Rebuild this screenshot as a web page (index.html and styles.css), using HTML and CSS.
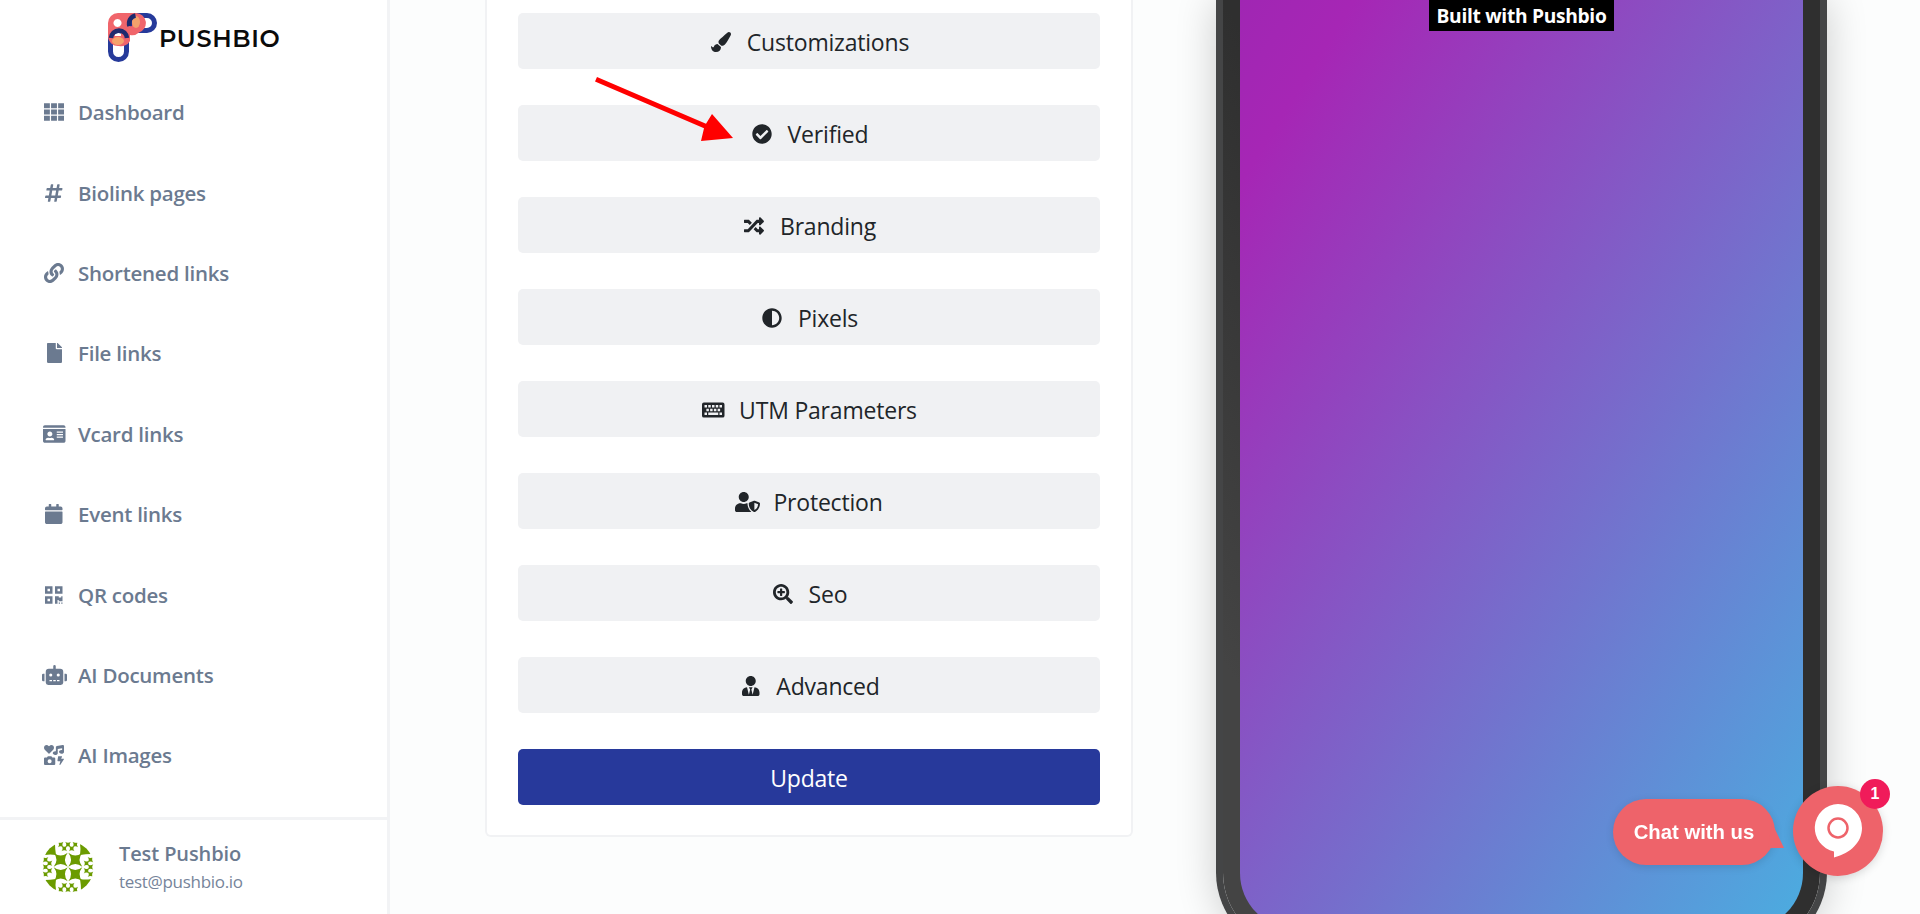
FILE: index.html
```html
<!DOCTYPE html>
<html lang="en">
<head>
<meta charset="utf-8">
<title>Pushbio</title>
<link rel="stylesheet" href="styles.css">
</head>
<body>
<div class="app">
  <aside class="sidebar">
    <a class="logo">
      <svg class="logo-mark" viewBox="0 0 50 50" aria-hidden="true">
        <rect x="2.500" y="18.500" width="16" height="29" rx="8" fill="none" stroke="#263a9a" stroke-width="5"/>
        <rect x="21.500" y="3.500" width="25" height="15" rx="7.500" fill="none" stroke="#263a9a" stroke-width="5"/>
        <path fill="#f0656b" fill-rule="evenodd" d="M10 1h18a10 10 0 0 1 3 19.500A10 10 0 0 1 22 23v6a10 10 0 0 1-11 5A10 10 0 0 1 0 24V11A10 10 0 0 1 10 1zM9.500 7a4 4 0 1 0 .01 0zM24 6a4 4 0 0 0-4 4v3a4 4 0 0 0 4 1zM9 20a3 3 0 0 0-2 4h6v-4z"/>
        <ellipse cx="10" cy="29" rx="6" ry="4" fill="#f4a26c"/>
        <ellipse cx="28" cy="10" rx="4" ry="6" fill="#f4a26c"/>
        <path fill="none" stroke="#1f2a6e" stroke-width="4.500" d="M3 26a8 8 0 0 1 8-7.500a8 8 0 0 1 8 7.500M21.500 14a8 8 0 0 1 6-10.500"/>
      </svg>
      <span class="logo-text">PUSHBIO</span>
    </a>
    <nav class="nav">
      <a class="nav-item"><span class="nav-icon"><svg class="icon" viewBox="0 0 512 512"><path d="M0 32h150v128H0zM181 32h150v128H181zM362 32h150v128H362zM0 192h150v128H0zM181 192h150v128H181zM362 192h150v128H362zM0 352h150v128H0zM181 352h150v128H181zM362 352h150v128H362z"/></svg></span>Dashboard</a>
      <a class="nav-item"><span class="nav-icon"><svg class="icon" viewBox="0 0 448 512"><path d="M440.667 182.109l7.143-40c1.313-7.355-4.342-14.109-11.813-14.109h-74.81l14.623-81.891C377.123 38.754 371.468 32 363.997 32h-40.632a12 12 0 0 0-11.813 9.891L296.175 128H197.54l14.623-81.891C213.477 38.754 207.822 32 200.35 32h-40.632a12 12 0 0 0-11.813 9.891L132.528 128H53.432a12 12 0 0 0-11.813 9.891l-7.143 40C33.163 185.246 38.818 192 46.289 192h74.81L98.242 320H19.146a12 12 0 0 0-11.813 9.891l-7.143 40C-1.123 377.246 4.532 384 12.003 384h74.81L72.19 465.891C70.877 473.246 76.532 480 84.003 480h40.632a12 12 0 0 0 11.813-9.891L151.826 384h98.634l-14.623 81.891C234.523 473.246 240.178 480 247.65 480h40.632a12 12 0 0 0 11.813-9.891L315.472 384h79.096a12 12 0 0 0 11.813-9.891l7.143-40c1.313-7.355-4.342-14.109-11.813-14.109h-74.81l22.857-128h79.096a12 12 0 0 0 11.813-9.891zM261.889 320h-98.634l22.857-128h98.634l-22.857 128z"/></svg></span>Biolink pages</a>
      <a class="nav-item"><span class="nav-icon"><svg class="icon" viewBox="0 0 512 512"><path d="M326.612 185.391c59.747 59.809 58.927 155.698.36 214.59-.11.12-.24.25-.36.37l-67.2 67.2c-59.27 59.27-155.699 59.262-214.96 0-59.27-59.26-59.27-155.7 0-214.96l37.106-37.106c9.84-9.84 26.786-3.3 27.294 10.606.648 17.722 3.826 35.527 9.69 52.721 1.986 5.822.567 12.262-3.783 16.612l-13.087 13.087c-28.026 28.026-28.905 73.66-1.155 101.96 28.024 28.579 74.086 28.749 102.325.51l67.2-67.19c28.191-28.191 28.073-73.757 0-101.83-3.701-3.694-7.429-6.564-10.341-8.569a16.037 16.037 0 0 1-6.947-12.606c-.396-10.567 3.348-21.456 11.698-29.806l21.054-21.055c5.521-5.521 14.182-6.199 20.584-1.731a152.482 152.482 0 0 1 20.522 17.197zM467.547 44.449c-59.261-59.262-155.69-59.27-214.96 0l-67.2 67.2c-.12.12-.25.25-.36.37-58.566 58.892-59.387 154.781.36 214.59a152.454 152.454 0 0 0 20.521 17.196c6.402 4.468 15.064 3.789 20.584-1.731l21.054-21.055c8.35-8.35 12.094-19.239 11.698-29.806a16.037 16.037 0 0 0-6.947-12.606c-2.912-2.005-6.64-4.875-10.341-8.569-28.073-28.073-28.191-73.639 0-101.83l67.2-67.19c28.239-28.239 74.3-28.069 102.325.51 27.75 28.3 26.872 73.934-1.155 101.96l-13.087 13.087c-4.35 4.35-5.769 10.79-3.783 16.612 5.864 17.194 9.042 34.999 9.69 52.721.509 13.906 17.454 20.446 27.294 10.606l37.106-37.106c59.271-59.259 59.271-155.699.001-214.959z"/></svg></span>Shortened links</a>
      <a class="nav-item"><span class="nav-icon"><svg class="icon" viewBox="0 0 384 512"><path d="M224 136V0H24C10.700 0 0 10.700 0 24v464c0 13.300 10.700 24 24 24h336c13.300 0 24-10.700 24-24V160H248c-13.200 0-24-10.800-24-24zm160-14.100v6.100H256V0h6.100c6.400 0 12.500 2.500 17 7l97.900 98c4.500 4.500 7 10.600 7 16.900z"/></svg></span>File links</a>
      <a class="nav-item"><span class="nav-icon"><svg class="icon" viewBox="0 0 576 512"><path d="M528 32H48C21.500 32 0 53.500 0 80v16h576V80c0-26.500-21.500-48-48-48zM0 432c0 26.500 21.500 48 48 48h480c26.500 0 48-21.500 48-48V128H0v304zm352-232c0-4.400 3.600-8 8-8h144c4.400 0 8 3.600 8 8v16c0 4.400-3.600 8-8 8H360c-4.400 0-8-3.600-8-8v-16zm0 64c0-4.400 3.600-8 8-8h144c4.400 0 8 3.600 8 8v16c0 4.400-3.600 8-8 8H360c-4.400 0-8-3.600-8-8v-16zm0 64c0-4.400 3.600-8 8-8h144c4.400 0 8 3.600 8 8v16c0 4.400-3.600 8-8 8H360c-4.400 0-8-3.600-8-8v-16zM176 192c35.300 0 64 28.700 64 64s-28.700 64-64 64-64-28.700-64-64 28.700-64 64-64zM67.100 396.200C75.500 370.500 99.600 352 128 352h8.200c12.300 5.100 25.700 8 39.800 8s27.600-2.900 39.800-8h8.200c28.400 0 52.500 18.500 60.900 44.200 3.200 9.900-5.200 19.800-15.600 19.800H82.700c-10.400 0-18.800-10-15.600-19.800z"/></svg></span>Vcard links</a>
      <a class="nav-item"><span class="nav-icon"><svg class="icon" viewBox="0 0 448 512"><path d="M12 192h424c6.600 0 12 5.400 12 12v260c0 26.500-21.500 48-48 48H48c-26.500 0-48-21.500-48-48V204c0-6.600 5.400-12 12-12zm436-44v-36c0-26.500-21.500-48-48-48h-48V12c0-6.600-5.400-12-12-12h-40c-6.600 0-12 5.400-12 12v52H160V12c0-6.600-5.400-12-12-12h-40c-6.600 0-12 5.400-12 12v52H48C21.500 64 0 85.500 0 112v36c0 6.600 5.400 12 12 12h424c6.600 0 12-5.400 12-12z"/></svg></span>Event links</a>
      <a class="nav-item"><span class="nav-icon"><svg class="icon" viewBox="0 0 448 512"><path d="M0 224h192V32H0v192zM64 96h64v64H64V96zm192-64v192h192V32H256zm128 128h-64V96h64v64zM0 480h192V288H0v192zm64-128h64v64H64v-64zm352-64h32v128h-96v-32h-32v96h-64V288h96v32h64v-32zm0 160h32v32h-32v-32zm-64 0h32v32h-32v-32z"/></svg></span>QR codes</a>
      <a class="nav-item"><span class="nav-icon"><svg class="icon" viewBox="0 0 640 512"><path d="M32,224H64V416H32A31.96166,31.96166,0,0,1,0,384V256A31.96166,31.96166,0,0,1,32,224Zm512-48V448a64.06328,64.06328,0,0,1-64,64H160a64.06328,64.06328,0,0,1-64-64V176a79.974,79.974,0,0,1,80-80H288V32a32,32,0,0,1,64,0V96H464A79.974,79.974,0,0,1,544,176ZM264,256a40,40,0,1,0-40,40A39.997,39.997,0,0,0,264,256Zm-8,128H192v32h64Zm96,0H288v32h64ZM456,256a40,40,0,1,0-40,40A39.997,39.997,0,0,0,456,256Zm-8,128H384v32h64ZM640,256V384a31.96166,31.96166,0,0,1-32,32H576V224h32A31.96166,31.96166,0,0,1,640,256Z"/></svg></span>AI Documents</a>
      <a class="nav-item"><span class="nav-icon"><svg class="icon" viewBox="0 0 512 512"><path d="M116.650 219.350a15.680 15.680 0 0 0 22.650 0l96.750-99.830c28.150-29 26.500-77.100-4.910-103.880C203.750-7.700 163-3.500 137.860 22.440L128 32.580l-9.850-10.140C93.050-3.500 52.250-7.700 24.860 15.640c-31.410 26.780-33 74.850-5 103.880zm143.920 100.490h-48l-7.080-14.240a27.390 27.390 0 0 0-25.660-17.780h-71.710a27.390 27.390 0 0 0-25.660 17.780l-7 14.240h-48A27.450 27.450 0 0 0 0 347.300v137.250A27.440 27.440 0 0 0 27.430 512h233.140A27.450 27.450 0 0 0 288 484.550V347.300a27.450 27.450 0 0 0-27.430-27.460zM144 468a52 52 0 1 1 52-52 52 52 0 0 1-52 52zm355.400-115.900h-60.580l22.360-50.750c2.100-6.650-3.930-13.210-12.180-13.210h-75.590c-6.300 0-11.660 3.900-12.500 9.100l-16.800 106.930c-1 6.300 4.880 11.890 12.500 11.890h62.310l-24.200 83c-1.890 6.650 4.200 12.900 12.230 12.900a13.260 13.260 0 0 0 10.920-5.250l92.400-138.910c4.880-6.910-1.160-15.700-10.870-15.700zM478.080.33L329.510 23.170C314.870 25.420 304 38.920 304 54.830V161.600a83.250 83.250 0 0 0-16-1.700c-35.350 0-64 21.480-64 48s28.650 48 64 48c35.200 0 63.730-21.320 64-47.660V99.660l112-17.220v47.180a83.250 83.250 0 0 0-16-1.700c-35.350 0-64 21.480-64 48s28.650 48 64 48c35.200 0 63.730-21.320 64-47.660V32c0-19.480-16-34.420-33.920-31.670z"/></svg></span>AI Images</a>
    </nav>
    <div class="user">
      <svg class="avatar" viewBox="0 0 52 52" aria-hidden="true">
        <defs>
          <clipPath id="avatar-clip"><circle cx="26" cy="26" r="26"/></clipPath>
          <path id="star" d="M-7-7Q0-1.500 7-7Q1.500 0 7 7Q0 1.500-7 7Q-1.500 0-7-7z"/>
          <path id="mini" d="M-2.800-2.800Q0-.6 2.800-2.800Q.6 0 2.800 2.800Q0 .6-2.800 2.800Q-.6 0-2.800-2.800z"/>
          <g id="edge">
            <use href="#mini" x="18.700" y="3.500"/><use href="#mini" x="26" y="3.500"/><use href="#mini" x="33.300" y="3.500"/>
            <use href="#mini" x="22.300" y="7.500"/><use href="#mini" x="29.700" y="7.500"/>
            <path d="M14 14Q8 13 3 14Q4 5 13 3Q13 8 14 14z"/>
          </g>
        </defs>
        <g clip-path="url(#avatar-clip)" fill="#6b9b00">
          <use href="#star" x="18.700" y="18.700"/><use href="#star" x="33.300" y="18.700"/>
          <use href="#star" x="18.700" y="33.300"/><use href="#star" x="33.300" y="33.300"/>
          <use href="#edge"/>
          <use href="#edge" transform="rotate(90 26 26)"/>
          <use href="#edge" transform="rotate(180 26 26)"/>
          <use href="#edge" transform="rotate(270 26 26)"/>
        </g>
      </svg>
      <div class="user-text">
        <div class="user-name">Test Pushbio</div>
        <div class="user-mail">test@pushbio.io</div>
      </div>
    </div>
  </aside>

  <main class="main">
    <section class="card">
      <button class="tab"><span class="tab-icon"><svg class="icon" viewBox="0 0 512 512"><path d="M167.020 309.340c-40.120 2.580-76.530 17.860-97.190 72.300-2.350 6.210-8 9.980-14.590 9.980-11.110 0-45.460-27.670-55.250-34.350C0 439.620 37.930 512 128 512c75.860 0 128-43.770 128-120.190 0-3.110-.65-6.080-.97-9.130l-88.010-73.340zM457.890 0c-15.160 0-29.370 6.710-40.210 16.450C213.270 199.050 192 203.340 192 257.090c0 13.700 3.250 26.760 8.730 38.700l63.820 53.180c7.210 1.800 14.640 3.030 22.390 3.030 62.110 0 98.110-45.470 211.160-256.460 7.380-14.350 13.900-29.850 13.900-45.990C512 20.640 486 0 457.890 0z"/></svg></span>Customizations</button>
      <button class="tab"><span class="tab-icon"><svg class="icon" viewBox="0 0 512 512"><path d="M504 256c0 136.967-111.033 248-248 248S8 392.967 8 256 119.033 8 256 8s248 111.033 248 248zM227.314 387.314l184-184c6.248-6.248 6.248-16.379 0-22.627l-22.627-22.627c-6.248-6.249-16.379-6.249-22.628 0L216 308.118l-70.059-70.059c-6.248-6.248-16.379-6.248-22.628 0l-22.627 22.627c-6.248 6.248-6.248 16.379 0 22.627l104 104c6.249 6.249 16.379 6.249 22.628.001z"/></svg></span>Verified</button>
      <button class="tab"><span class="tab-icon"><svg class="icon" viewBox="0 0 512 512"><path d="M504.971 359.029c9.373 9.373 9.373 24.569 0 33.941l-80 79.984c-15.010 15.010-40.971 4.490-40.971-16.971V416h-58.785a12.004 12.004 0 0 1-8.773-3.812l-70.556-75.596 53.333-57.143L352 336h32v-39.981c0-21.438 25.943-31.998 40.971-16.971l80 79.981zM12 176h84l52.781 56.551 53.333-57.143-70.556-75.596A11.999 11.999 0 0 0 122.785 96H12c-6.627 0-12 5.373-12 12v56c0 6.627 5.373 12 12 12zm372 0v39.984c0 21.460 25.961 31.980 40.971 16.971l80-79.984c9.373-9.373 9.373-24.569 0-33.941l-80-79.981C409.943 24.021 384 34.582 384 56.019V96h-58.785a12.004 12.004 0 0 0-8.773 3.812L96 336H12c-6.627 0-12 5.373-12 12v56c0 6.627 5.373 12 12 12h110.785c3.326 0 6.503-1.381 8.773-3.812L352 176h32z"/></svg></span>Branding</button>
      <button class="tab"><span class="tab-icon"><svg class="icon" viewBox="0 0 512 512"><path d="M8 256c0 136.966 111.033 248 248 248s248-111.034 248-248S392.966 8 256 8 8 119.033 8 256zm248 184V72c101.705 0 184 82.311 184 184 0 101.705-82.311 184-184 184z"/></svg></span>Pixels</button>
      <button class="tab"><span class="tab-icon"><svg class="icon" viewBox="0 0 576 512"><path fill-rule="evenodd" d="M48 64h480a48 48 0 0 1 48 48v288a48 48 0 0 1-48 48H48a48 48 0 0 1-48-48V112a48 48 0 0 1 48-48zM64 128v64h64v-64zM160 128v64h64v-64zM256 128v64h64v-64zM352 128v64h64v-64zM448 128v64h64v-64zM112 224v64h64v-64zM208 224v64h64v-64zM304 224v64h64v-64zM400 224v64h64v-64zM64 320v64h64v-64zM160 320v64h256v-64zM448 320v64h64v-64z"/></svg></span>UTM Parameters</button>
      <button class="tab"><span class="tab-icon"><svg class="icon" viewBox="0 0 640 512"><path d="M622.300 271.100l-115.200-45c-4.100-1.600-12.600-3.700-22.200 0l-115.200 45c-10.700 4.200-17.700 14-17.700 24.900 0 111.600 68.700 188.800 132.900 213.900 9.600 3.700 18 1.600 22.200 0C558.400 489.900 640 420.500 640 296c0-10.900-7-20.700-17.700-24.900zM496 462.400V273.300l95.500 37.300c-5.600 87.100-60.900 135.400-95.500 151.800zM224 256c70.700 0 128-57.300 128-128S294.700 0 224 0 96 57.300 96 128s57.300 128 128 128zm96 40c0-2.500.8-4.700 1.100-7.200-2.500-.1-4.900-.8-7.500-.8h-16.700c-22.200 10.200-46.900 16-72.900 16s-50.600-5.800-72.900-16h-16.700C60.200 288 0 348.200 0 422.400V464c0 26.500 21.500 48 48 48h352c6.800 0 13.300-1.500 19.200-4-54-42.900-99.200-116.700-99.200-212z"/></svg></span>Protection</button>
      <button class="tab"><span class="tab-icon"><svg class="icon" viewBox="0 0 512 512"><path d="M304 192v32c0 6.600-5.400 12-12 12h-56v56c0 6.600-5.400 12-12 12h-32c-6.600 0-12-5.400-12-12v-56h-56c-6.600 0-12-5.400-12-12v-32c0-6.600 5.400-12 12-12h56v-56c0-6.600 5.400-12 12-12h32c6.600 0 12 5.400 12 12v56h56c6.600 0 12 5.400 12 12zm201 284.700L476.700 505c-9.400 9.400-24.600 9.400-33.900 0L343 405.300c-4.500-4.500-7-10.600-7-17V372c-35.300 27.600-79.700 44-128 44C93.100 416 0 322.900 0 208S93.100 0 208 0s208 93.100 208 208c0 48.300-16.400 92.700-44 128h16.300c6.400 0 12.500 2.500 17 7l99.700 99.700c9.300 9.400 9.300 24.600 0 34zM344 208c0-75.200-60.800-136-136-136S72 132.800 72 208s60.800 136 136 136 136-60.800 136-136z"/></svg></span>Seo</button>
      <button class="tab"><span class="tab-icon"><svg class="icon" viewBox="0 0 448 512"><path d="M224 256c70.700 0 128-57.300 128-128S294.700 0 224 0 96 57.300 96 128s57.300 128 128 128zm95.800 32.600L272 480l-32-136 32-56h-96l32 56-32 136-47.800-191.400C56.900 292 0 350.300 0 422.400V464c0 26.500 21.500 48 48 48h352c26.500 0 48-21.500 48-48v-41.600c0-72.100-56.900-130.400-128.200-133.800z"/></svg></span>Advanced</button>
      <button class="update">Update</button>
      <svg class="arrow" viewBox="0 0 140 66" aria-hidden="true">
        <path fill="#ff0000" d="M2 0L111 46.700L117 37L138 61L106 64L109 51.300L0 4.600z"/>
      </svg>
    </section>

    <div class="phone">
      <div class="screen">
        <span class="built">Built with Pushbio</span>
      </div>
    </div>
  </main>
</div>

<div class="chat">
  <span class="chat-bubble">Chat with us</span>
  <span class="chat-button">
    <svg class="chat-icon" viewBox="0 0 48 54" aria-hidden="true">
      <path fill="#fff" d="M24 0a24 24 0 0 1 24 24c0 14-11 25-28 29.500v-6A24 24 0 0 1 24 0z"/>
      <circle cx="24" cy="24" r="9.500" fill="#fff" stroke="#ee636a" stroke-width="2.500"/>
    </svg>
    <span class="chat-badge">1</span>
  </span>
</div>
</body>
</html>
```
FILE: styles.css
```css
* { box-sizing: border-box; }
html, body { margin: 0; height: 914px; overflow: hidden; }
body { font-family: "Open Sans", "Noto Sans", sans-serif; background: #fcfdfd; color: #212529; }
.app { display: flex; height: 914px; }

.sidebar {
  width: 390px; flex: none; display: flex; flex-direction: column;
  background: #fff; border-right: 3px solid #f2f3f5;
}
.logo { display: flex; align-items: flex-start; height: 50px; margin: 12px 0 0 108px; }
.logo-mark { width: 50px; height: 50px; flex: none; }
.logo-text {
  font-family: "Montserrat", "Inter", sans-serif; font-size: 24px; font-weight: 600;
  line-height: 28px; margin: 13px 0 0 1px; color: #0b0b0b; letter-spacing: .65px;
}

.nav { flex: 1; display: flex; flex-direction: column; padding-top: 10px; }
.nav-item {
  display: flex; align-items: center; height: 80.4px; padding-left: 42px;
  font-size: 20.500px; font-weight: 600; color: #6b7a90; letter-spacing: -.25px;
}
.nav-icon { width: 24px; margin-right: 12px; display: flex; justify-content: center; flex: none; }
.icon { display: block; height: 20px; width: auto; fill: currentColor; overflow: visible; }

.user {
  height: 97px; flex: none; display: flex; align-items: center; padding: 0 0 0 42px;
  border-top: 3px solid #f2f3f5;
}
.avatar { width: 52px; height: 52px; flex: none; margin-right: 25px; }
.user-name { font-size: 20px; font-weight: 600; color: #6b7a90; line-height: 26px; letter-spacing: -.1px; }
.user-mail { font-size: 17px; color: #76849a; line-height: 24px; margin-top: 3px; letter-spacing: -.3px; }

.main { flex: 1; display: flex; align-items: flex-start; padding-left: 95px; overflow: hidden; }
.card {
  position: relative; width: 648px; flex: none; padding: 13px 31px 30px;
  display: flex; flex-direction: column; gap: 36px;
  background: #fff; border: 2px solid #f1f2f4; border-top: 0; border-radius: 0 0 6px 6px;
}
.tab, .update {
  display: flex; align-items: center; justify-content: center; height: 56px; width: 100%;
  border: 0; border-radius: 5px; font: inherit; font-size: 23px; letter-spacing: -.2px; padding: 2px 0 0;
}
.tab { background: #f0f1f3; color: #212529; }
.tab-icon { width: 25px; margin-right: 13px; display: flex; justify-content: center; flex: none; }
.update { background: #27399b; color: #fff; }
.arrow { position: absolute; left: 108px; top: 77px; width: 140px; height: 66px; }

.phone {
  width: 611px; height: 953px; flex: none; margin-left: 83px; padding: 0 17px 17px;
  background: linear-gradient(to bottom left, #2f2f2f 50%, #444 85%) padding-box;
  border: solid #444546; border-width: 0 7px 7px;
  border-radius: 0 0 80px 80px; box-shadow: 0 0 40px rgba(0, 0, 0, .2);
}
.screen {
  height: 100%; display: flex; justify-content: center; align-items: flex-start;
  border-radius: 0 0 56px 56px;
  background: linear-gradient(122deg, #a026b3 0%, #a626b5 10%, #4bade0 100%);
}
.built {
  background: #000; color: #fff; font-size: 19.200px; font-weight: 700; line-height: 31px;
  padding: 0 7px; letter-spacing: -.3px;
}

.chat { position: fixed; left: 1613px; top: 786px; display: flex; align-items: center; width: 300px; height: 91px; }
.chat-bubble {
  position: relative; width: 162px; height: 66px; border-radius: 33px; margin-top: 1px;
  display: flex; align-items: center; justify-content: center;
  background: #ee636a; color: #fff; font-family: "Liberation Sans", Arial, sans-serif;
  font-size: 20.300px; font-weight: 700; box-shadow: 0 2px 8px rgba(0, 0, 0, .12);
}
.chat-bubble::after {
  content: ""; position: absolute; left: 150px; top: 24px; width: 21px; height: 25px;
  background: #ee636a; clip-path: polygon(43% 0, 100% 100%, 24% 100%);
}
.chat-button {
  position: absolute; left: 180px; top: 0; width: 90px; height: 90px; border-radius: 50%;
  display: flex; align-items: center; justify-content: center;
  background: #ee636a; box-shadow: 0 2px 10px rgba(0, 0, 0, .15);
}
.chat-icon { width: 48px; height: 54px; }
.chat-badge {
  position: absolute; right: -7px; top: -7px; width: 30px; height: 30px; border-radius: 50%;
  display: flex; align-items: center; justify-content: center;
  background: #f01b5a; color: #fff; font-family: "Liberation Sans", Arial, sans-serif;
  font-size: 16px; font-weight: 700;
}
```
